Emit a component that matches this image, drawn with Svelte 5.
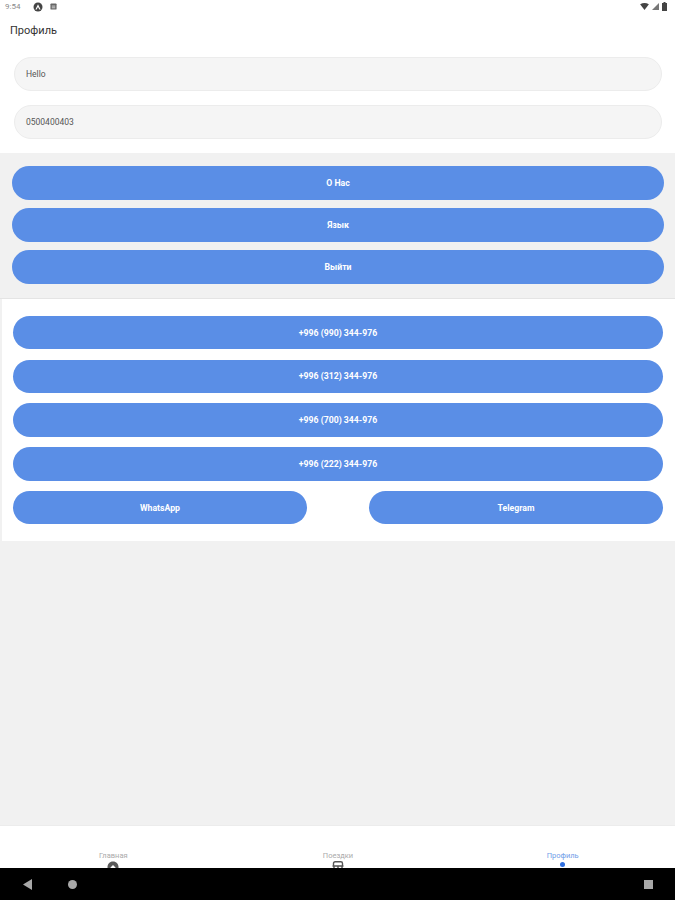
<script>
  const group = ['О Нас', 'Язык', 'Выйти'];
  const phones = ['+996 (990) 344-976', '+996 (312) 344-976', '+996 (700) 344-976', '+996 (222) 344-976'];
</script>

<div class="screen">
  <div class="top">
    <div class="status">
      <span class="time">9:54</span>
      <svg class="ic-a" viewBox="0 0 10 10"><circle cx="5" cy="5" r="4.5" fill="#444"/><path d="M5 2.2 7.6 7.6H6.3L5 5 3.7 7.6H2.4Z" fill="#fff"/></svg>
      <svg class="ic-b" viewBox="0 0 8 8"><rect x=".5" y=".5" width="7" height="7" rx="1" fill="#666"/><rect x="2" y="3" width="4" height="1" fill="#ddd"/><rect x="2" y="5" width="4" height="1" fill="#ddd"/></svg>
      <span class="grow"></span>
      <svg class="ic-wifi" viewBox="0 0 10 8"><path d="M0 1.5Q5-1.5 10 1.5L5 8Z" fill="#444"/></svg>
      <svg class="ic-sig" viewBox="0 0 8 8"><path d="M8 0V8H0Z" fill="#777"/></svg>
      <svg class="ic-bat" viewBox="0 0 5 9"><path d="M1.5 0h2v1H5v8H0V1h1.5Z" fill="#444"/></svg>
    </div>
    <h1>Профиль</h1>
    <div class="fields">
      <div class="field">Hello</div>
      <div class="field">0500400403</div>
    </div>
  </div>

  <section class="group">
    {#each group as g}
      <button class="btn">{g}</button>
    {/each}
  </section>

  <section class="panel">
    {#each phones as p}
      <button class="btn slim">{p}</button>
    {/each}
    <div class="split">
      <button class="btn slim">WhatsApp</button>
      <button class="btn slim">Telegram</button>
    </div>
  </section>

  <div class="fill"></div>

  <nav class="tabs">
    <div class="tab">
      <span>Главная</span>
      <svg viewBox="0 0 12 12"><path d="M6 .5C9.5.5 11.5 3 11.5 6V12H.5V6C.5 3 2.5.5 6 .5Z" fill="#5a5a5a"/><path d="M6 4 8.5 6.5V9h-5V6.500Z" fill="#fff"/></svg>
    </div>
    <div class="tab">
      <span>Поездки</span>
      <svg viewBox="0 0 12 12"><path d="M1.500 5V2.500Q1.500.8 3.200.8H8.800Q10.500.8 10.500 2.500V5M.5 5H11.500M2 5V12M10 5V12M6 5V12" fill="none" stroke="#555" stroke-width="1.400"/></svg>
    </div>
    <div class="tab active">
      <span>Профиль</span>
      <i class="dot"></i>
    </div>
  </nav>

  <div class="sysnav">
    <svg class="back" viewBox="0 0 9 11"><path d="M9 0V11L0 5.500Z" fill="#a8a8a8"/></svg>
    <i class="home"></i>
    <span class="grow"></span>
    <i class="recent"></i>
  </div>
</div>

<style>
  :global(body) { margin: 0; }
  .screen {
    width: 675px;
    height: 900px;
    display: flex;
    flex-direction: column;
    background: #f1f1f1;
    font-family: Roboto, "Liberation Sans", sans-serif;
    overflow: hidden;
  }
  .top { height: 153px; background: #fff; box-sizing: border-box; flex: none; }
  .status {
    height: 13px;
    display: flex;
    align-items: center;
    padding: 0 8px 0 5px;
    gap: 3px;
    color: #8a8a8a;
    font-size: 8px;
  }
  .time { width: 22px; }
  .ic-a { width: 10px; height: 10px; margin-left: 3px; }
  .ic-b { width: 7px; height: 7px; margin-left: 4px; }
  .ic-wifi { width: 9px; height: 7px; }
  .ic-sig { width: 7px; height: 7px; }
  .ic-bat { width: 5px; height: 9px; }
  .grow { flex: 1; }
  h1 {
    margin: 10px 0 0 10px;
    font-size: 11px;
    line-height: 15px;
    font-weight: 400;
    color: #333;
  }
  .fields {
    margin: 19px 13px 0 14px;
    display: flex;
    flex-direction: column;
    gap: 13.7px;
  }
  .field {
    height: 34.3px;
    box-sizing: border-box;
    border: 1px solid #ececec;
    border-radius: 17px;
    background: #f5f5f5;
    padding: 0 11px;
    display: flex;
    align-items: center;
    font-size: 8.5px;
    color: #555;
  }
  .group {
    height: 146px;
    flex: none;
    box-sizing: border-box;
    padding: 13px 11px 0 12px;
    display: flex;
    flex-direction: column;
    gap: 7.7px;
    border-bottom: 1px solid #e4e4e4;
  }
  .btn {
    display: block;
    width: 100%;
    height: 34.3px;
    flex: none;
    border: 0;
    padding: 0;
    border-radius: 18px;
    background: #5a8ee6;
    color: #fff;
    font: 700 8.7px Roboto, "Liberation Sans", sans-serif;
    text-align: center;
  }
  .slim { height: 33.4px; border-radius: 17px; }
  .panel {
    height: 242px;
    flex: none;
    box-sizing: border-box;
    margin-left: 2px;
    background: #fff;
    padding: 17px 12px 0 11px;
    display: flex;
    flex-direction: column;
    gap: 10.35px;
  }
  .split { display: flex; justify-content: space-between; }
  .split .btn { width: 294px; }
  .fill { flex: 1; }
  .tabs {
    height: 43px;
    flex: none;
    background: #fff;
    border-top: 1px solid #ececec;
    box-sizing: border-box;
    display: flex;
    padding-left: 1px;
    overflow: hidden;
  }
  .tab {
    flex: 1;
    display: flex;
    flex-direction: column;
    align-items: center;
    padding-top: 25px;
    color: #aaa;
    font-size: 7.5px;
    line-height: 10px;
  }
  .tab svg { width: 12px; height: 12px; margin-top: 0; flex: none; }
  .active { color: #6f9de8; }
  .dot { width: 5px; height: 5px; margin-top: 1px; border-radius: 50%; background: #2f6fe0; flex: none; }
  .sysnav {
    height: 32px;
    flex: none;
    background: #000;
    display: flex;
    align-items: center;
    padding: 0 22px 0 23px;
    box-sizing: border-box;
  }
  .back { width: 9px; height: 11px; }
  .home { width: 9px; height: 9px; margin-left: 36px; border-radius: 50%; background: #a8a8a8; }
  .recent { width: 9px; height: 9px; background: #a8a8a8; }
</style>
